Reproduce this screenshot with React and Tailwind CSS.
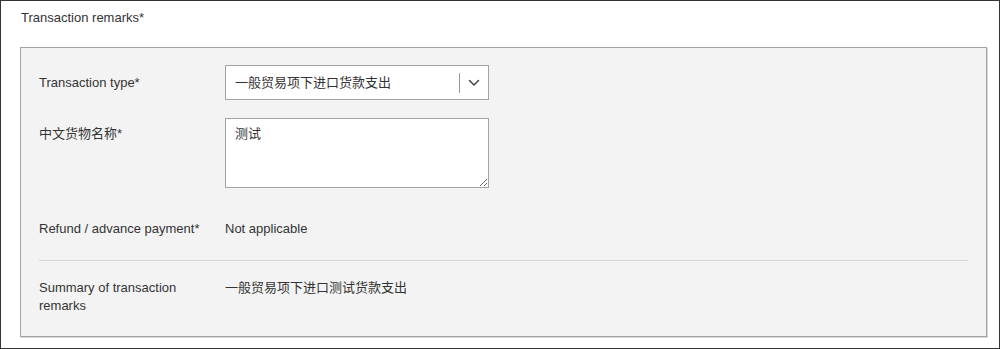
import React from 'react';

const font = { fontFamily: '"Liberation Sans", "Noto Sans CJK SC", Arial, sans-serif' };

const Chevron = () => (
    <svg width="12" height="8" viewBox="0 0 12 8" fill="none">
        <path d="M1.5 1.5 L6 6 L10.5 1.5" stroke="#444" strokeWidth="1.5" strokeLinecap="round" strokeLinejoin="round" />
    </svg>
);

const App = () => {
    return (
        <div className="w-[1000px] h-[349px] bg-white border border-[#333] text-[13px] text-[#333] leading-[18px]" style={font}>
            {/* Title */}
            <div className="pl-[20px] pt-[8px]">Transaction remarks*</div>

            {/* Panel */}
            <div className="ml-[19px] mt-[20px] w-[967px] h-[290px] bg-[#f3f3f3] border border-[#a3a3a3] shadow-[1px_1px_0_#d9d9d9] px-[18px]">
                {/* Transaction type */}
                <div className="flex items-center mt-[17px] h-[35px]">
                    <div className="w-[186px]">Transaction type*</div>
                    <div className="w-[264px] h-[35px] bg-white border border-[#a3a3a3] flex items-center">
                        <span className="flex-1 pl-[9px]">一般贸易项下进口货款支出</span>
                        <span className="w-px h-[20px] bg-[#999]" />
                        <span className="w-[28px] flex justify-center items-center"><Chevron /></span>
                    </div>
                </div>

                {/* Chinese goods name */}
                <div className="flex mt-[18px]">
                    <div className="w-[186px] pt-[7px]">中文货物名称*</div>
                    <textarea
                        defaultValue="测试"
                        className="w-[264px] h-[70px] bg-white border border-[#a3a3a3] px-[9px] pt-[6px] outline-none text-[13px] leading-[18px] text-[#333]"
                        style={font}
                    />
                </div>

                {/* Refund */}
                <div className="flex mt-[32px]">
                    <div className="w-[186px]">Refund / advance payment*</div>
                    <div>Not applicable</div>
                </div>

                <div className="mt-[22px] h-px bg-[#d6d6d6]" />

                {/* Summary */}
                <div className="flex mt-[18px]">
                    <div className="w-[186px] pr-[30px]">Summary of transaction remarks</div>
                    <div>一般贸易项下进口测试货款支出</div>
                </div>
            </div>
        </div>
    );
};

export default App;
